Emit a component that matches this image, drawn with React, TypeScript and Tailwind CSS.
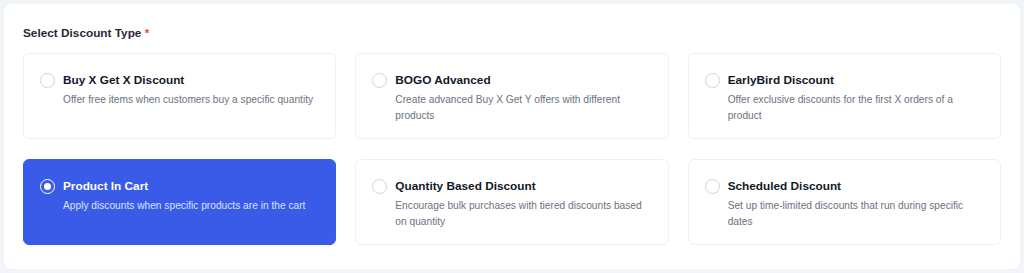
import React, { useState } from 'react';

const discountTypes = [
  { id: 'bxgx', title: 'Buy X Get X Discount', desc: 'Offer free items when customers buy a specific quantity' },
  { id: 'bogo', title: 'BOGO Advanced', desc: 'Create advanced Buy X Get Y offers with different products' },
  { id: 'early', title: 'EarlyBird Discount', desc: 'Offer exclusive discounts for the first X orders of a product' },
  { id: 'cart', title: 'Product In Cart', desc: 'Apply discounts when specific products are in the cart' },
  { id: 'qty', title: 'Quantity Based Discount', desc: 'Encourage bulk purchases with tiered discounts based on quantity' },
  { id: 'sched', title: 'Scheduled Discount', desc: 'Set up time-limited discounts that run during specific dates' },
];

const App: React.FC = () => {
  const [selected, setSelected] = useState('cart');

  return (
    <div className="min-h-[273px] bg-[#f1f4f8] p-1 font-['Liberation_Sans',Arial,sans-serif]">
      <div className="rounded-lg bg-white px-[19px] pt-[22px] pb-[24px]">
        <h2 className="mb-[13px] text-[11.8px] font-bold leading-[14px] text-[#1f2937]">
          Select Discount Type <span className="text-[#ef4444]">*</span>
        </h2>

        <div className="grid grid-cols-3 gap-x-[19px] gap-y-[20px]">
          {discountTypes.map((item) => {
            const active = selected === item.id;
            return (
              <button
                key={item.id}
                onClick={() => setSelected(item.id)}
                className={`flex h-[86px] items-start gap-[8px] rounded-md border px-[16px] pt-[16px] text-left ${
                  active ? 'border-[#3a5ae8] bg-[#3a5ae8]' : 'border-[#eef0f3] bg-white'
                }`}
              >
                <span
                  className={`mt-[3px] flex h-[15px] w-[15px] shrink-0 items-center justify-center rounded-full border-[1.5px] ${
                    active ? 'border-white' : 'border-[#d1d5db]'
                  }`}
                >
                  {active && <span className="h-[7px] w-[7px] rounded-full bg-white" />}
                </span>
                <span className="flex flex-col">
                  <span className={`text-[11.8px] font-bold leading-[20px] ${active ? 'text-white' : 'text-[#111827]'}`}>
                    {item.title}
                  </span>
                  <span className={`mt-[2px] text-[10.2px] leading-[16px] ${active ? 'text-[#dbe3ff]' : 'text-[#6b7280]'}`}>
                    {item.desc}
                  </span>
                </span>
              </button>
            );
          })}
        </div>
      </div>
    </div>
  );
};

export default App;
